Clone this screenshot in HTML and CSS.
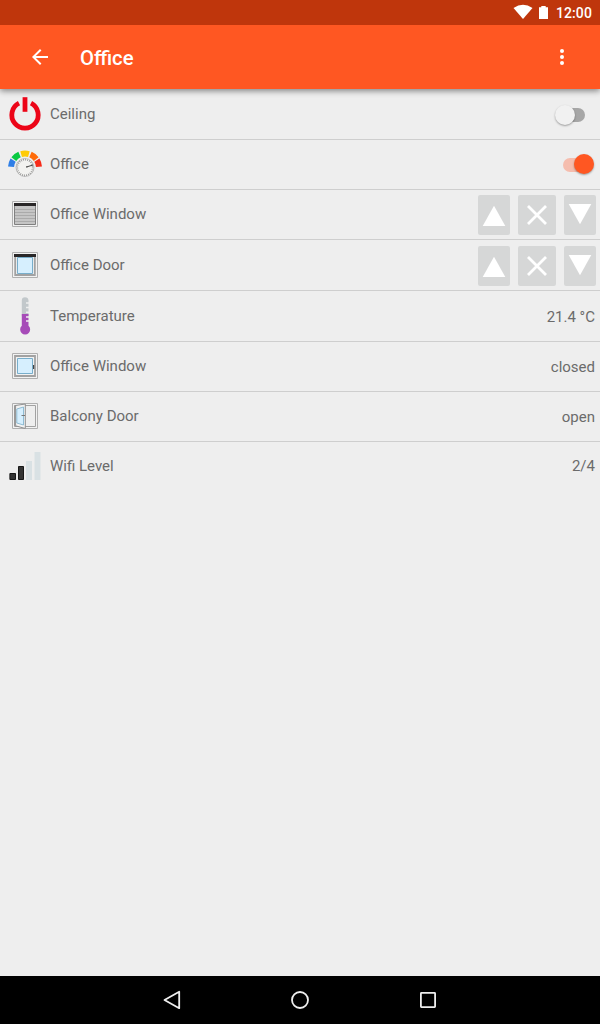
FILE: index.html
```
<!DOCTYPE html>
<html lang="en">
<head>
<meta charset="utf-8">
<title>Office</title>
<link rel="stylesheet" href="styles.css">
</head>
<body>
<div class="status">
  <svg class="status-icons" width="40" height="25" viewBox="0 0 40 25" fill="#fff"><path d="M0.5 8Q10 1.5 19.5 8L10 19Z"/><path d="M26 7.2H28.3V6H32.7V7.2H35V19H26Z"/></svg>
  <span class="clock">12:00</span>
</div>
<header class="appbar">
  <svg class="back" width="24" height="24" viewBox="0 0 24 24" fill="#fff"><path d="M20 11H7.83l5.59-5.59L12 4l-8 8 8 8 1.41-1.41L7.83 13H20v-2z"/></svg>
  <h1 class="title">Office</h1>
  <svg class="more" width="24" height="24" viewBox="0 0 24 24" fill="#fff"><circle cx="12" cy="6" r="2"/><circle cx="12" cy="12" r="2"/><circle cx="12" cy="18" r="2"/></svg>
</header>
<main class="list">
  <div class="row tall">
    <svg class="icon" viewBox="0 0 50 50"><path d="M19 13.2A13.2 13.2 0 1 0 31 13.2" fill="none" stroke="#ec0518" stroke-width="4.8"/><path d="M22.6 7.2H27.4V21.8H22.6Z" fill="#ec0518"/></svg>
    <span class="label">Ceiling</span>
    <span class="switch"><i class="track"></i><i class="thumb"></i></span>
  </div>
  <div class="row">
    <svg class="icon" viewBox="0 0 50 50">
      <g fill="none" stroke-width="6">
        <path d="M11.02 26.76A14 14 0 0 1 13.12 20.08" stroke="#2f7fe6"/>
        <path d="M13.8 19.1A14 14 0 0 1 19.53 14.61" stroke="#09c943"/>
        <path d="M21.14 14.04A14 14 0 0 1 28.86 14.04" stroke="#ffcb05"/>
        <path d="M30.47 14.61A14 14 0 0 1 36.2 19.1" stroke="#ff6a08"/>
        <path d="M36.88 20.08A14 14 0 0 1 38.98 26.76" stroke="#f72a18"/>
      </g>
      <circle cx="25" cy="27.5" r="9.8" fill="#eee"/>
      <circle cx="25" cy="27.5" r="9" fill="#f2f2f0" stroke="#aaa" stroke-width=".7"/>
      <circle cx="25" cy="27.5" r="7.8" fill="none" stroke="#8f8f8f" stroke-width="1.8" stroke-dasharray=".8 1.24"/>
      <path d="M27 26.8L33 25" stroke="#444" stroke-width="1"/><circle cx="26.8" cy="26.9" r=".8" fill="#555"/>
    </svg>
    <span class="label">Office</span>
    <span class="switch on"><i class="track"></i><i class="thumb"></i></span>
  </div>
  <div class="row">
    <svg class="icon" viewBox="0 0 50 50">
      <path d="M12.5 11.5H37.5V36.5H12.5Z" fill="#f2f2f2" stroke="#b0b0b0"/><path d="M14.5 14H35.5V34.5H14.5Z" fill="#c5c5c5" stroke="#808080"/>
      <path d="M15 19.5H35M15 22.5H35M15 25.5H35M15 28.5H35M15 31.5H35" stroke="#aaa"/><path d="M14 13H36V16H14Z" fill="#292728"/>
    </svg>
    <span class="label">Office Window</span>
    <div class="buttons">
      <button class="btn"><svg width="32" height="40" viewBox="0 0 32 40"><path d="M16 10.7L27.3 31H4.7Z" fill="#fff"/></svg></button>
      <button class="btn stop"><svg width="38" height="40" viewBox="0 0 38 40"><path d="M10 11L28 29M28 11L10 29" stroke="#fff" stroke-width="2.8"/></svg></button>
      <button class="btn"><svg width="32" height="40" viewBox="0 0 32 40"><path d="M16 29.3L4.7 9H27.3Z" fill="#fff"/></svg></button>
    </div>
  </div>
  <div class="row tall">
    <svg class="icon" viewBox="0 0 50 50">
      <path d="M12.5 11.5H37.5V36.5H12.5Z" fill="#f2f2f2" stroke="#b0b0b0"/><path d="M15.2 14H34.8V34H15.2Z" fill="#f2f2f2" stroke="#a2a2a2" stroke-width="1.8"/>
      <path d="M17.5 16.5H32.5V32.5H17.5Z" fill="#d6effe" stroke="#78aecb"/><path d="M14 13H36V16H14Z" fill="#292728"/>
    </svg>
    <span class="label">Office Door</span>
    <div class="buttons">
      <button class="btn"><svg width="32" height="40" viewBox="0 0 32 40"><path d="M16 10.7L27.3 31H4.7Z" fill="#fff"/></svg></button>
      <button class="btn stop"><svg width="38" height="40" viewBox="0 0 38 40"><path d="M10 11L28 29M28 11L10 29" stroke="#fff" stroke-width="2.8"/></svg></button>
      <button class="btn"><svg width="32" height="40" viewBox="0 0 32 40"><path d="M16 29.3L4.7 9H27.3Z" fill="#fff"/></svg></button>
    </div>
  </div>
  <div class="row tall">
    <svg class="icon" viewBox="0 0 50 50">
      <path d="M21.8 24V8.4Q21.8 5.2 25 5.2T28.5 8.4V24Z" fill="#c2c8cb"/>
      <path d="M21.8 22H28.5V33.8A5 5 0 1 1 21.8 33.8Z" fill="#a64bb8"/>
      <path d="M26 11H29M26 15.5H29M26 20.3H29M26 25H29M26 29H29" stroke="#eee" stroke-width="1.4"/>
    </svg>
    <span class="label">Temperature</span>
    <span class="value">21.4 °C</span>
  </div>
  <div class="row">
    <svg class="icon" viewBox="0 0 50 50">
      <path d="M12.5 11.5H37.5V36.5H12.5Z" fill="#f2f2f2" stroke="#b0b0b0"/><path d="M15 14H35V34H15Z" fill="#f2f2f2" stroke="#a2a2a2" stroke-width="1.8"/>
      <path d="M17.5 16.5H32.5V31.5H17.5Z" fill="#d6effe" stroke="#78aecb"/><path d="M33.6 23V27" stroke="#444" stroke-width="1.2"/>
    </svg>
    <span class="label">Office Window</span>
    <span class="value">closed</span>
  </div>
  <div class="row">
    <svg class="icon" viewBox="0 0 50 50">
      <path d="M12.5 11.5H37.5V36.5H12.5Z" fill="#f2f2f2" stroke="#b0b0b0"/><path d="M14.5 13.5H35.5V34.5H14.5Z" fill="#eee" stroke="#a2a2a2"/>
      <path d="M14.8 13.6L25.3 12V36.5L14.8 33.6Z" fill="#f2f2f2" stroke="#909090"/><path d="M15.3 14V33.5" stroke="#999" stroke-width="1.6"/>
      <path d="M16.8 17L23.5 15V33L16.8 31Z" fill="#d6effe" stroke="#86b5ce" stroke-width=".9"/><path d="M21.5 23.5H25" stroke="#777"/>
    </svg>
    <span class="label">Balcony Door</span>
    <span class="value">open</span>
  </div>
  <div class="row last">
    <svg class="icon" viewBox="0 0 50 50">
      <path d="M9.9 31.5H15.5V37.5H9.9ZM18.5 24.5H23.5V37.5H18.5Z" fill="#333" stroke="#171717"/>
      <path d="M26 19H32V38H26ZM34.5 10H40.5V38H34.5Z" fill="#d9e1e4"/>
    </svg>
    <span class="label">Wifi Level</span>
    <span class="value">2/4</span>
  </div>
</main>
<nav class="navbar">
  <svg width="24" height="24" viewBox="0 0 24 24"><path d="M19.2 3.8V20.2L4.5 12Z"/></svg>
  <svg width="24" height="24" viewBox="0 0 24 24"><circle cx="12" cy="12" r="8"/></svg>
  <svg width="24" height="24" viewBox="0 0 24 24"><rect x="4.9" y="4.9" width="14.2" height="14.2" rx=".5"/></svg>
</nav>
</body>
</html>
```
FILE: styles.css
```
* { box-sizing: border-box; }
body {
  margin: 0;
  height: 1024px;
  display: flex;
  flex-direction: column;
  background: #eee;
  font-family: Roboto, sans-serif;
  overflow: hidden;
}
svg { display: block; flex: none; }
.status {
  height: 25px;
  flex: none;
  display: flex;
  justify-content: flex-end;
  gap: 3px;
  padding-right: 8px;
  background: #bf360c;
  color: #fff;
  z-index: 2;
}
.clock { font-size: 14px; font-weight: 500; line-height: 26px; letter-spacing: .1px; }
.appbar {
  height: 64px;
  flex: none;
  display: flex;
  align-items: center;
  padding: 0 26px 0 28px;
  background: #ff5722;
  color: #fff;
  box-shadow: 0 2px 6px rgba(0, 0, 0, .45);
  z-index: 1;
}
.title { margin: 2px 0 0 28px; flex: 1; font-size: 20.3px; font-weight: 500; line-height: 24px; }
.list { flex: 1; }
.row {
  height: 50px;
  display: flex;
  align-items: flex-start;
  border-bottom: 1px solid #cecece;
  color: #6b6b6b;
}
.row.tall { height: 51px; padding-top: 1px; }
.row.last { border: 0; }
.icon { width: 50px; height: 50px; }
.label { flex: 1; font-size: 15px; line-height: 48px; }
.value { padding-right: 5px; font-size: 15px; line-height: 50px; }
.last .value { line-height: 48px; }
.switch {
  position: relative;
  width: 40px;
  height: 50px;
  margin-right: 5px;
}
.track {
  position: absolute;
  left: 8px;
  top: 18px;
  width: 22px;
  height: 14px;
  border-radius: 7px;
  background: #a6a6a6;
}
.thumb {
  position: absolute;
  left: -.5px;
  top: 14.5px;
  width: 20px;
  height: 20px;
  border-radius: 50%;
  background: #f1f1f1;
  box-shadow: 0 1px 2px rgba(0, 0, 0, .35);
}
.on .track { background: #f5bdae; }
.on .thumb { left: 18.5px; top: 14.2px; background: #ff5722; }
.buttons { display: flex; gap: 8px; padding: 5px 4px 0 0; }
.btn {
  width: 32px;
  height: 40px;
  padding: 0;
  border: 0;
  border-radius: 2px;
  background: #d6d7d7;
}
.btn.stop { width: 38px; }
.navbar {
  height: 48px;
  flex: none;
  display: flex;
  justify-content: center;
  align-items: center;
  gap: 104px;
  background: #000;
  fill: none;
  stroke: #eee;
  stroke-width: 1.8;
  stroke-linejoin: round;
}
```
